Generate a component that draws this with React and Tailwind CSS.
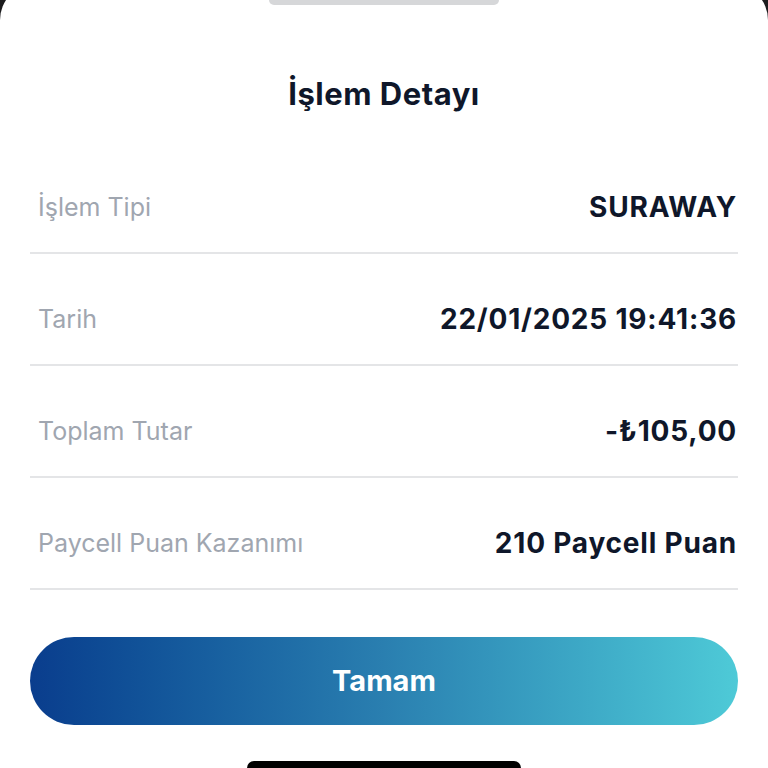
import React from "react";

const rows = [
  { label: "İşlem Tipi", value: "SURAWAY" },
  { label: "Tarih", value: "22/01/2025 19:41:36" },
  { label: "Toplam Tutar", value: "-₺105,00" },
  { label: "Paycell Puan Kazanımı", value: "210 Paycell Puan" },
];

export default function App() {
  return (
    <div
      className="h-[768px] w-[768px] overflow-hidden bg-[#1c1c1e]"
      style={{ fontFamily: "Inter, 'Noto Sans', sans-serif" }}
    >
      <div className="-mt-4 flex h-[800px] flex-col items-center rounded-t-[36px] bg-white">
        {/* grabber */}
        <div className="mt-[11px] h-[10px] w-[230px] rounded-full bg-[#d6d7d9]" />

        {/* Title */}
        <h1 className="mt-[71px] text-[31px] leading-[36px] font-bold tracking-[0.5px] text-[#0f172a]">
          İşlem Detayı
        </h1>

        {/* Detail rows */}
        <div className="mt-[30px] w-full px-[30px]">
          {rows.map((row) => (
            <div
              key={row.label}
              className="flex h-[112px] items-end justify-between border-b-2 border-[#e4e5e7] pb-[28px] pl-[8px] pr-[1px]"
            >
              <span className="text-[25px] leading-[34px] text-[#a0a6b0]">
                {row.label}
              </span>
              <span className="text-[28px] leading-[34px] font-bold tracking-[0.8px] text-[#0f172a]">
                {row.value}
              </span>
            </div>
          ))}
        </div>

        {/* Button */}
        <div className="mt-[47px] w-full px-[30px]">
          <button className="flex h-[88px] w-full items-center justify-center rounded-[44px] bg-gradient-to-r from-[#0a3d8d] via-[#2a7fb0] to-[#4ecad7] text-[29px] font-bold text-white">
            Tamam
          </button>
        </div>

        {/* home indicator */}
        <div className="mt-[36px] h-[14px] w-[274px] rounded-full bg-black" />
      </div>
    </div>
  );
}
